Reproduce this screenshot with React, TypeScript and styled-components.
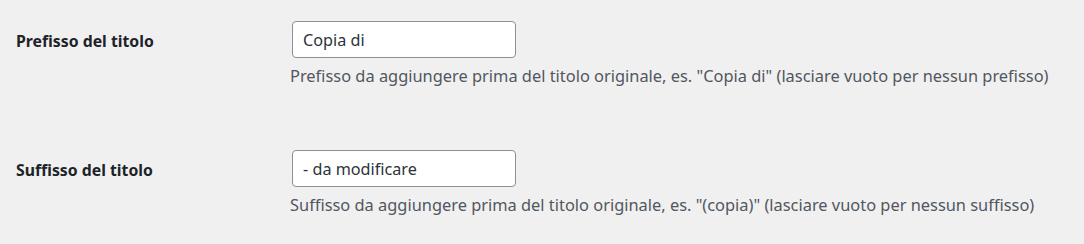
import React from "react";
import styled, { createGlobalStyle } from "styled-components";

const Global = createGlobalStyle`
  html, body { margin: 0; padding: 0; background: #f0f0f1; }
  body { font-family: "Noto Sans", "Open Sans", sans-serif; color: #1d2327; }
`;

const Table = styled.div`
  display: flex;
  flex-direction: column;
  padding: 0 16px;
`;

const Row = styled.div`
  display: grid;
  grid-template-columns: 276px 1fr;
  padding: 21px 0 42px;

  &:last-child {
    padding-bottom: 0;
  }
`;

const Label = styled.label`
  font-size: 15.8px;
  font-weight: 700;
  color: #1d2327;
  height: 37px;
  padding-top: 2px;
  box-sizing: border-box;
  display: flex;
  align-items: center;
`;

const Field = styled.div`
  display: flex;
  flex-direction: column;
  align-items: flex-start;
`;

const Input = styled.input`
  width: 224px;
  height: 37px;
  box-sizing: border-box;
  border: 1px solid #8c8f94;
  border-radius: 4px;
  background: #fff;
  padding: 0 10px;
  font-family: "Noto Sans", "Open Sans", sans-serif;
  font-size: 16.2px;
  color: #2c3338;
  outline: none;
`;

const Description = styled.p`
  margin: 7px 0 0 -2px;
  font-size: 16.4px;
  line-height: 22px;
  color: #50575e;
`;

const rows = [
  {
    id: "prefix",
    label: "Prefisso del titolo",
    value: "Copia di",
    desc: 'Prefisso da aggiungere prima del titolo originale, es. "Copia di" (lasciare vuoto per nessun prefisso)',
  },
  {
    id: "suffix",
    label: "Suffisso del titolo",
    value: "- da modificare",
    desc: 'Suffisso da aggiungere prima del titolo originale, es. "(copia)" (lasciare vuoto per nessun suffisso)',
  },
];

export default function App() {
  return (
    <>
      <Global />
      <Table>
        {rows.map((r) => (
          <Row key={r.id}>
            <Label htmlFor={r.id}>{r.label}</Label>
            <Field>
              <Input id={r.id} type="text" defaultValue={r.value} />
              <Description>{r.desc}</Description>
            </Field>
          </Row>
        ))}
      </Table>
    </>
  );
}
